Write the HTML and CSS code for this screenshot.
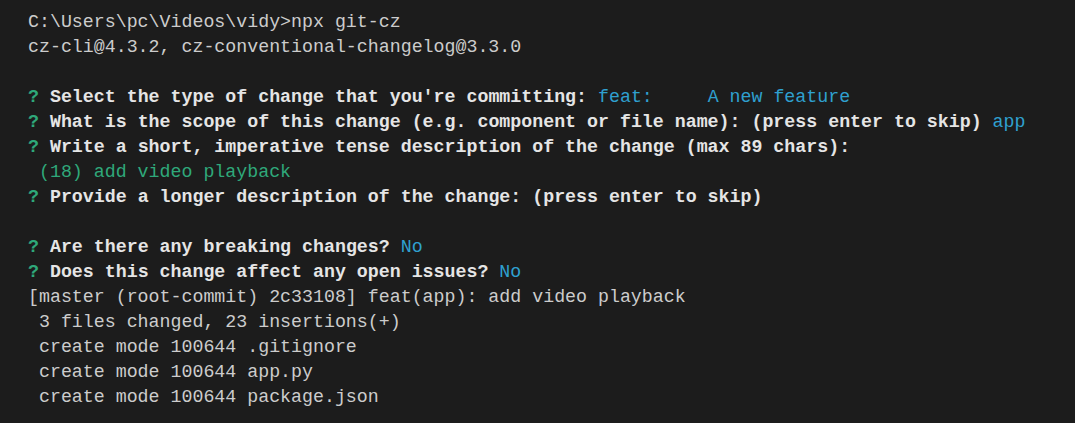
FILE: index.html
```html
<!DOCTYPE html>
<html>
<head>
<meta charset="utf-8">
<link rel="stylesheet" href="styles.css">
</head>
<body>
<div class="term">
<div class="line">C:\Users\pc\Videos\vidy&gt;npx git-cz</div>
<div class="line">cz-cli@4.3.2, cz-conventional-changelog@3.3.0</div>
<div class="line"> </div>
<div class="line"><span class="q">?</span> <span class="b">Select the type of change that you're committing:</span> <span class="ans">feat:     A new feature</span></div>
<div class="line"><span class="q">?</span> <span class="b">What is the scope of this change (e.g. component or file name): (press enter to skip)</span> <span class="ans">app</span></div>
<div class="line"><span class="q">?</span> <span class="b">Write a short, imperative tense description of the change (max 89 chars):</span></div>
<div class="line"> <span class="grn">(18) add video playback</span></div>
<div class="line"><span class="q">?</span> <span class="b">Provide a longer description of the change: (press enter to skip)</span></div>
<div class="line"> </div>
<div class="line"><span class="q">?</span> <span class="b">Are there any breaking changes?</span> <span class="ans">No</span></div>
<div class="line"><span class="q">?</span> <span class="b">Does this change affect any open issues?</span> <span class="ans">No</span></div>
<div class="line">[master (root-commit) 2c33108] feat(app): add video playback</div>
<div class="line"> 3 files changed, 23 insertions(+)</div>
<div class="line"> create mode 100644 .gitignore</div>
<div class="line"> create mode 100644 app.py</div>
<div class="line"> create mode 100644 package.json</div>
</div>
</body>
</html>
```
FILE: styles.css
```css
html, body {
  margin: 0;
  padding: 0;
  background: #1c1c1c;
  width: 1075px;
  height: 423px;
  overflow: hidden;
}
.term {
  padding: 10px 0 0 28px;
  font-family: "Liberation Mono", "DejaVu Sans Mono", monospace;
  font-size: 18.28px;
  line-height: 25px;
  color: #cccccc;
}
.line {
  white-space: pre;
  height: 25px;
}
.q {
  color: #2fa87a;
  font-weight: bold;
}
.b {
  font-weight: bold;
  color: #e5e5e5;
}
.ans {
  color: #2fa0cf;
}
.grn {
  color: #2fa87a;
}
```
